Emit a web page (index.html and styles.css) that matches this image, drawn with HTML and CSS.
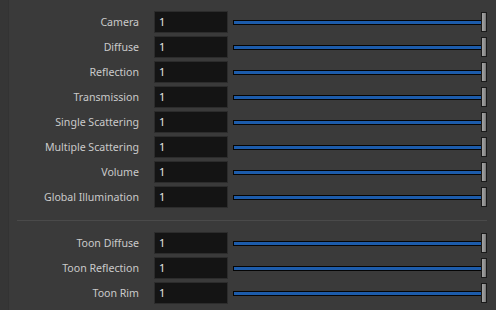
FILE: index.html
```html
<!DOCTYPE html>
<html>
<head>
<meta charset="utf-8">
<link rel="stylesheet" href="styles.css">
</head>
<body>
<div class="panel">
  <div class="strip"></div>
  <div class="content">
    <div class="group">
      <div class="row"><span class="label">Camera</span><div class="field">1</div><div class="slider"><div class="track"></div><div class="handle"></div></div></div>
      <div class="row"><span class="label">Diffuse</span><div class="field">1</div><div class="slider"><div class="track"></div><div class="handle"></div></div></div>
      <div class="row"><span class="label">Reflection</span><div class="field">1</div><div class="slider"><div class="track"></div><div class="handle"></div></div></div>
      <div class="row"><span class="label">Transmission</span><div class="field">1</div><div class="slider"><div class="track"></div><div class="handle"></div></div></div>
      <div class="row"><span class="label">Single Scattering</span><div class="field">1</div><div class="slider"><div class="track"></div><div class="handle"></div></div></div>
      <div class="row"><span class="label">Multiple Scattering</span><div class="field">1</div><div class="slider"><div class="track"></div><div class="handle"></div></div></div>
      <div class="row"><span class="label">Volume</span><div class="field">1</div><div class="slider"><div class="track"></div><div class="handle"></div></div></div>
      <div class="row"><span class="label">Global Illumination</span><div class="field">1</div><div class="slider"><div class="track"></div><div class="handle"></div></div></div>
    </div>
    <div class="sep"></div>
    <div class="group">
      <div class="row"><span class="label">Toon Diffuse</span><div class="field">1</div><div class="slider"><div class="track"></div><div class="handle"></div></div></div>
      <div class="row"><span class="label">Toon Reflection</span><div class="field">1</div><div class="slider"><div class="track"></div><div class="handle"></div></div></div>
      <div class="row"><span class="label">Toon Rim</span><div class="field">1</div><div class="slider"><div class="track"></div><div class="handle"></div></div></div>
    </div>
  </div>
</div>
</body>
</html>
```

FILE: styles.css
```css
html, body {
  margin: 0;
  padding: 0;
  background: #3a3a3a;
  font-family: "Noto Sans", "Open Sans", sans-serif;
  font-size: 10.6px;
  color: #cacaca;
}
.panel {
  display: flex;
  width: 496px;
  height: 310px;
  overflow: hidden;
}
.strip {
  width: 8px;
  flex: none;
  background: #363636;
  border-right: 1px solid #333333;
}
.content {
  flex: 1;
  padding-top: 11px;
}
.group {
  display: flex;
  flex-direction: column;
  gap: 3px;
}
.row {
  display: flex;
  align-items: center;
  height: 22px;
}
.label {
  width: 130px;
  text-align: right;
  white-space: nowrap;
  margin-right: 15px;
}
.field {
  height: 20px;
  width: 68px;
  background: #141414;
  border: 1px solid #2c2c2c;
  color: #e6e6e6;
  padding-left: 4px;
  line-height: 20px;
  font-size: 11px;
}
.slider {
  display: flex;
  align-items: center;
  margin-left: 5px;
  width: 254px;
  height: 22px;
}
.track {
  flex: 1;
  height: 3px;
  background: #1d5cab;
  border: 1px solid #050505;
  border-right: none;
}
.handle {
  width: 4px;
  height: 18px;
  background: linear-gradient(to right, #a4a4a4, #909090 60%, #707070);
  border: 1px solid #1a1a1a;
}
.sep {
  height: 1px;
  margin: 12px 0 11px 8px;
  width: 470px;
  background: #4a4a4a;
}
```
